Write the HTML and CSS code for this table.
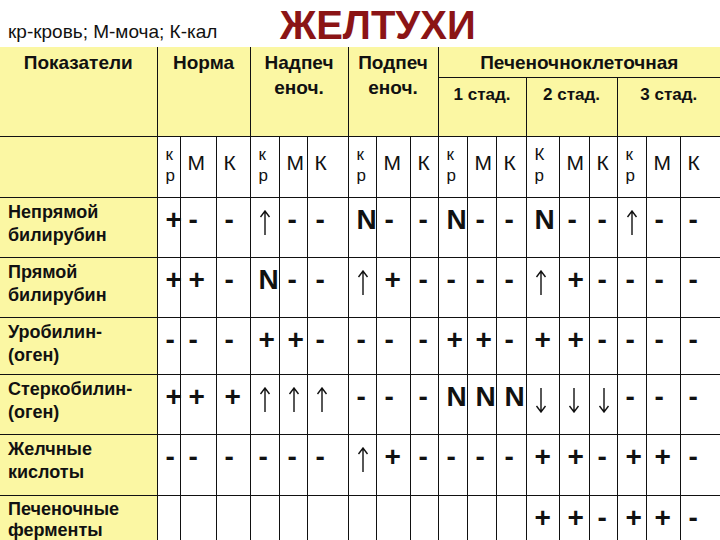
FILE: index.html
```html
<!DOCTYPE html>
<html lang="ru">
<head>
<meta charset="utf-8">
<title>Желтухи</title>
<link rel="stylesheet" href="styles.css">
</head>
<body>
<div class="top">
  <div class="legend">кр-кровь; М-моча; К-кал</div>
  <h1 class="title">ЖЕЛТУХИ</h1>
</div>
<table class="grid">
  <colgroup>
    <col class="w157">
    <col class="w23"><col class="w36"><col class="w34">
    <col class="w29"><col class="w28"><col class="w41">
    <col class="w28"><col class="w34"><col class="w28">
    <col class="w29"><col class="w29"><col class="w30">
    <col class="w33"><col class="w30"><col class="w28">
    <col class="w29"><col class="w34"><col class="w40">
  </colgroup>
  <thead>
    <tr class="r-a">
      <th class="lab" rowspan="2">Показатели</th>
      <th colspan="3" rowspan="2">Норма</th>
      <th colspan="3" rowspan="2">Надпеч<br>еноч.</th>
      <th colspan="3" rowspan="2">Подпеч<br>еноч.</th>
      <th colspan="9" class="e">Печеночноклеточная</th>
    </tr>
    <tr class="r-b">
      <th colspan="3" class="stage">1 стад.</th>
      <th colspan="3" class="stage">2 стад.</th>
      <th colspan="3" class="stage e">3 стад.</th>
    </tr>
    <tr class="r-sub">
      <td class="lab"></td>
      <td class="kr">к<br>р</td><td class="mk">М</td><td class="mk">К</td>
      <td class="kr">к<br>р</td><td class="mk">М</td><td class="mk">К</td>
      <td class="kr">к<br>р</td><td class="mk">М</td><td class="mk">К</td>
      <td class="kr">к<br>р</td><td class="mk">М</td><td class="mk">К</td>
      <td class="kr">К<br>р</td><td class="mk">М</td><td class="mk">К</td>
      <td class="kr">к<br>р</td><td class="mk">М</td><td class="mk e">К</td>
    </tr>
  </thead>
  <tbody>
    <tr class="r60">
      <td class="lab">Непрямой<br>билирубин</td>
      <td class="v">+</td><td class="v">-</td><td class="v">-</td>
      <td class="v"><svg class="ar" viewBox="0 0 12 26" aria-label="↑"><path d="M6 1V25M1.5 7L6 1L10.5 7"/></svg></td><td class="v">-</td><td class="v">-</td>
      <td class="v">N</td><td class="v">-</td><td class="v">-</td>
      <td class="v">N</td><td class="v">-</td><td class="v">-</td>
      <td class="v">N</td><td class="v">-</td><td class="v">-</td>
      <td class="v"><svg class="ar" viewBox="0 0 12 26" aria-label="↑"><path d="M6 1V25M1.5 7L6 1L10.5 7"/></svg></td><td class="v">-</td><td class="v e">-</td>
    </tr>
    <tr class="r60">
      <td class="lab">Прямой<br>билирубин</td>
      <td class="v">+</td><td class="v">+</td><td class="v">-</td>
      <td class="v">N</td><td class="v">-</td><td class="v">-</td>
      <td class="v"><svg class="ar" viewBox="0 0 12 26" aria-label="↑"><path d="M6 1V25M1.5 7L6 1L10.5 7"/></svg></td><td class="v">+</td><td class="v">-</td>
      <td class="v">-</td><td class="v">-</td><td class="v">-</td>
      <td class="v"><svg class="ar" viewBox="0 0 12 26" aria-label="↑"><path d="M6 1V25M1.5 7L6 1L10.5 7"/></svg></td><td class="v">+</td><td class="v">-</td>
      <td class="v">-</td><td class="v">-</td><td class="v e">-</td>
    </tr>
    <tr class="r57">
      <td class="lab">Уробилин-<br>(оген)</td>
      <td class="v">-</td><td class="v">-</td><td class="v">-</td>
      <td class="v">+</td><td class="v">+</td><td class="v">-</td>
      <td class="v">-</td><td class="v">-</td><td class="v">-</td>
      <td class="v">+</td><td class="v">+</td><td class="v">-</td>
      <td class="v">+</td><td class="v">+</td><td class="v">-</td>
      <td class="v">-</td><td class="v">-</td><td class="v e">-</td>
    </tr>
    <tr class="r60">
      <td class="lab">Стеркобилин-<br>(оген)</td>
      <td class="v">+</td><td class="v">+</td><td class="v">+</td>
      <td class="v"><svg class="ar" viewBox="0 0 12 26" aria-label="↑"><path d="M6 1V25M1.5 7L6 1L10.5 7"/></svg></td><td class="v"><svg class="ar" viewBox="0 0 12 26" aria-label="↑"><path d="M6 1V25M1.5 7L6 1L10.5 7"/></svg></td><td class="v"><svg class="ar" viewBox="0 0 12 26" aria-label="↑"><path d="M6 1V25M1.5 7L6 1L10.5 7"/></svg></td>
      <td class="v">-</td><td class="v">-</td><td class="v">-</td>
      <td class="v">N</td><td class="v">N</td><td class="v">N</td>
      <td class="v"><svg class="ar" viewBox="0 0 12 26" aria-label="↓"><path d="M6 1V25M1.5 19L6 25L10.5 19"/></svg></td><td class="v"><svg class="ar" viewBox="0 0 12 26" aria-label="↓"><path d="M6 1V25M1.5 19L6 25L10.5 19"/></svg></td><td class="v"><svg class="ar" viewBox="0 0 12 26" aria-label="↓"><path d="M6 1V25M1.5 19L6 25L10.5 19"/></svg></td>
      <td class="v">-</td><td class="v">-</td><td class="v e">-</td>
    </tr>
    <tr class="r61">
      <td class="lab">Желчные<br>кислоты</td>
      <td class="v">-</td><td class="v">-</td><td class="v">-</td>
      <td class="v">-</td><td class="v">-</td><td class="v">-</td>
      <td class="v"><svg class="ar" viewBox="0 0 12 26" aria-label="↑"><path d="M6 1V25M1.5 7L6 1L10.5 7"/></svg></td><td class="v">+</td><td class="v">-</td>
      <td class="v">-</td><td class="v">-</td><td class="v">-</td>
      <td class="v">+</td><td class="v">+</td><td class="v">-</td>
      <td class="v">+</td><td class="v">+</td><td class="v e">-</td>
    </tr>
    <tr class="r60">
      <td class="lab last">Печеночные<br>ферменты</td>
      <td class="v"></td><td class="v"></td><td class="v"></td>
      <td class="v"></td><td class="v"></td><td class="v"></td>
      <td class="v"></td><td class="v"></td><td class="v"></td>
      <td class="v"></td><td class="v"></td><td class="v"></td>
      <td class="v">+</td><td class="v">+</td><td class="v">-</td>
      <td class="v">+</td><td class="v">+</td><td class="v e">-</td>
    </tr>
  </tbody>
</table>
</body>
</html>
```
FILE: styles.css
```css
html, body {
  margin: 0;
  padding: 0;
  background: #ffffff;
}
body {
  font-family: "Liberation Sans", Arial, sans-serif;
  color: #111111;
  width: 720px;
  height: 540px;
  overflow: hidden;
}
.top {
  height: 47px;
  display: flex;
  align-items: flex-start;
}
.legend {
  width: 264px;
  padding: 21px 0 0 8px;
  font-size: 19px;
  line-height: 21px;
  white-space: nowrap;
}
.title {
  margin: 0 0 0 8px;
  padding-top: 5px;
  font-size: 40px;
  line-height: 40px;
  font-weight: 700;
  color: #8b1416;
}
.grid {
  width: 720px;
  border-collapse: collapse;
  table-layout: fixed;
}
.w157 { width: 157px; }
.w23 { width: 23px; }
.w28 { width: 28px; }
.w29 { width: 29px; }
.w30 { width: 30px; }
.w33 { width: 33px; }
.w34 { width: 34px; }
.w36 { width: 36px; }
.w40 { width: 40px; }
.w41 { width: 41px; }
.grid th, .grid td {
  border: 1px solid #111111;
  padding: 0;
  vertical-align: top;
  overflow: visible;
  white-space: nowrap;
}
.grid th {
  background: #fbf7a3;
  font-size: 19px;
  font-weight: 700;
  line-height: 25px;
  padding-top: 3px;
  text-align: center;
}
.r-a th { border-top-style: hidden; }
.r-a { height: 30px; }
.r-b { height: 59px; }
.r-sub { height: 61px; }
.r60 { height: 60px; }
.r57 { height: 57px; }
.r61 { height: 61px; }
.grid th.stage {
  font-size: 17px;
  line-height: 22px;
  padding-top: 6px;
}
.grid .lab {
  border-left-style: hidden;
  background: #fbf7a3;
}
.grid .e { border-right-style: hidden; }
.grid td.lab {
  font-size: 18px;
  font-weight: 700;
  line-height: 23px;
  padding: 3px 0 0 8px;
  text-align: left;
}
.grid td.lab.last {
  line-height: 21px;
  padding-top: 3px;
}
.grid td.kr {
  font-size: 17px;
  line-height: 21px;
  padding: 7px 0 0 8px;
}
.grid td.mk {
  font-size: 21px;
  line-height: 23px;
  padding: 14px 0 0 7px;
}
.grid td.v {
  font-size: 28px;
  font-weight: 700;
  line-height: 32px;
  padding: 6px 0 0 8px;
}
.ar {
  display: block;
  width: 12px;
  height: 26px;
  margin-top: 6px;
  fill: none;
  stroke: #111111;
  stroke-width: 1.4;
}
```
